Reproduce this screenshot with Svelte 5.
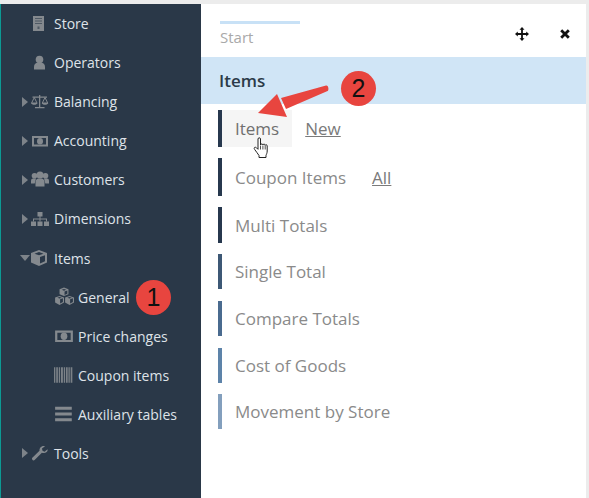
<script>
  const menu = [
    { label: "Store", icon: "store" },
    { label: "Operators", icon: "user" },
    { label: "Balancing", icon: "scale", caret: "right" },
    { label: "Accounting", icon: "money", caret: "right" },
    { label: "Customers", icon: "group", caret: "right" },
    { label: "Dimensions", icon: "tree", caret: "right" },
    { label: "Items", icon: "cube", caret: "down" },
    { label: "General", icon: "cubes", sub: true },
    { label: "Price changes", icon: "money", sub: true },
    { label: "Coupon items", icon: "barcode", sub: true },
    { label: "Auxiliary tables", icon: "bars", sub: true },
    { label: "Tools", icon: "wrench", caret: "right" },
  ];

  const reports = [
    { label: "Items", link: "New", bar: "#27384e", h: 37, gap: 11, hover: true },
    { label: "Coupon Items", link: "All", bar: "#27384e", h: 38, gap: 11 },
    { label: "Multi Totals", bar: "#27384e", h: 36, gap: 11 },
    { label: "Single Total", bar: "#3d5875", h: 35, gap: 12 },
    { label: "Compare Totals", bar: "#4a6b8f", h: 35, gap: 12 },
    { label: "Cost of Goods", bar: "#5d83a9", h: 35, gap: 11 },
    { label: "Movement by Store", bar: "#839fbd", h: 35, gap: 0 },
  ];
</script>

{#snippet icon(name)}
  <svg class="ico" viewBox="0 0 18 16" fill="currentColor">
    {#if name === "store"}
      <path d="M2 0h11v15H2z" />
      <path d="M4 2h7v1H4zM4 4.500h7v1H4zM4 7h7v1H4zM6.500 10.500h2v2.500h-2z" fill="#2a3848" opacity=".6" />
    {:else if name === "user"}
      <circle cx="8.500" cy="4.500" r="3.800" />
      <path d="M3 14.500v-3C3 9 5 8 6.500 7.500h4c1.500 .5 3.500 1.500 3.500 4v3z" />
    {:else if name === "scale"}
      <path d="M8 1h1.300v12H8zM4 13h9.500v1.300H4zM1.500 2.500h14.500v1.300H1.500z" />
      <path d="M3.300 3.500 .6 9h5.400zM14 3.500 11.300 9h5.400z" fill="none" stroke="currentColor" />
      <path d="M0 9h6.600c-.5 2.400-6.100 2.400-6.600 0zM10.700 9h6.600c-.5 2.400-6.100 2.400-6.600 0z" />
    {:else if name === "money"}
      <path fill-rule="evenodd" d="M1 3h16v10.500H1zM3 5v6.500h12V5z" />
      <ellipse cx="9" cy="8.200" rx="3" ry="3.300" />
    {:else if name === "group"}
      <circle cx="9" cy="3" r="3.600" />
      <circle cx="3.500" cy="3.800" r="2.800" />
      <circle cx="14.500" cy="3.800" r="2.800" />
      <path d="M4.500 14.500V10c0-2 1.500-3.500 3-3.500h3c1.500 0 3 1.500 3 3.500v4.500z" />
      <path d="M0 11.500V9c0-1.800 1-2.500 2-2.500h3L3.700 11.500zM18 11.500V9c0-1.800-1-2.500-2-2.500h-3l1.300 5z" />
    {:else if name === "tree"}
      <path d="M6.500 1h5v4.500h-5zM0 10.500h5V15H0zM6.500 10.500h5V15h-5zM13 10.500h5V15h-5z" />
      <path d="M8.500 5h1v2.500H16v3h-1V8.500H9.500v2h-1v-2H3v2H2v-3h6.500z" />
    {:else if name === "cube"}
      <path fill-rule="evenodd" d="M8 0l8 3v9.500L8 16l-8-3.500V3zM8 2 3.500 3.700 8 5.300l4.500-1.600zM9 7v6.500l5-2.200V5.200z" />
    {:else if name === "cubes"}
      <path fill-rule="evenodd" d="M9-.5l4 1.500v4.500L9 7 5 5.500V1zM5 7l4 1.500V13l-4 2.300L1 13V8.500zM14 7l4 1.500V13l-4 2.300L10 13V8.500zM5 9.300 3 8.600 5 7.900l2 .7zM14 9.300l-2-.7 2-.7 2 .7zM9 2.300 7 1.500 9 .8l2 .7zM5.500 10v3.800L8 12.400V9.200zM14.500 10v3.800l2.500-1.400V9.200zM9.500 3v3.200l2.500-1.100V2.200z" />
    {:else if name === "barcode"}
      <path d="M0 1h1.200v14H0zM2 1h1.500v14H2zM4.300 1h1.200v14H4.300zM6.300 1H8v14H6.300zM8.800 1H10v14H8.800zM10.800 1h1.500v14h-1.500zM13 1h1.200v14H13zM15 1h1.500v14H15z" opacity=".9" />
    {:else if name === "bars"}
      <path d="M1 1.500h15v2.600H1zM1 6.700h15v2.600H1zM1 11.900h15v2.600H1z" />
    {:else if name === "wrench"}
      <path d="M16.500 4.200 13.500 6.700 11.500 5.700 11 3.500l3-2.300C11.500.4 8.300 2 8.500 5.700L1.300 12.800c-1.200 1.300 1 3.500 2.300 2.300l7.300-7.300c3 .8 6.400-1 5.600-3.600z" />
    {/if}
  </svg>
{/snippet}

<div class="page">
  <aside class="sidebar">
    <ul class="menu">
      {#each menu as item}
        <li class="menu-row" class:sub={item.sub}>
          <span class="caret-slot">
            {#if item.caret}<span class="caret {item.caret}"></span>{/if}
          </span>
          <span class="menu-icon">{@render icon(item.icon)}</span>
          <span class="menu-label">{item.label}</span>
        </li>
      {/each}
    </ul>
  </aside>

  <main class="panel">
    <div class="toolbar">
      <div class="tab">
        <span class="tab-line"></span>
        <span class="tab-label">Start</span>
      </div>
      <div class="tools">
        <svg viewBox="0 0 14 14" width="14" height="14" fill="#111">
          <path d="M7 0l2.500 2.800H7.900v3.300h3.300V4.500L14 7l-2.800 2.500V7.900H7.900v3.300h1.600L7 14l-2.500-2.800h1.600V7.900H2.800v1.600L0 7l2.800-2.500v1.600h3.300V2.800H4.500z" />
        </svg>
        <svg viewBox="0 0 10 10" width="10" height="10" fill="none" stroke="#111" stroke-width="2.800">
          <path d="M1.200 1.200l7.600 7.600M8.800 1.200 1.200 8.800" />
        </svg>
      </div>
    </div>

    <h2 class="title">Items</h2>

    <ul class="reports">
      {#each reports as r}
        <li class="report" style="height:{r.h}px;margin-bottom:{r.gap}px;border-color:{r.bar}">
          <span class="report-label" class:hover={r.hover}>{r.label}</span>
          {#if r.link}<span class="report-link">{r.link}</span>{/if}
        </li>
      {/each}
    </ul>
  </main>
</div>

<!-- annotations pasted over the screenshot -->
<span class="badge one">1</span>
<span class="badge two">2</span>
<svg class="arrow" viewBox="0 0 80 40" width="80" height="40">
  <path d="M70 2.500c2.500-.7 3.500 5 1 5.800L30 26l-5-11z" fill="#e8453f" />
  <path d="M2 30 21 11l10 23z" fill="#e8453f" />
</svg>
<svg class="hand" viewBox="0 0 16 22" width="17" height="22">
  <path d="M4.500 2c0-1.600 2.500-1.600 2.500 0v6c.3-1.500 2.300-1.300 2.400 0 .3-1.300 2.200-1.100 2.300.3.400-1 2-.7 2 .7v5c0 2-.7 3-1.200 4.500v2H5.500v-2C4 16.500 2.800 14.500 1.200 12.500-.2 10.800 1.500 9.500 3 10.800L4.500 12.300z" fill="#fff" stroke="#222" stroke-width="1" stroke-linejoin="round" />
  <path d="M7 8.500v4M9.400 8.500v4M11.700 8.500v4" stroke="#222" stroke-width=".8" />
</svg>

<style>
  :global(body) {
    margin: 0;
    background: #ececec;
  }

  .page {
    display: flex;
    width: 589px;
    height: 498px;
    padding-top: 4px;
    box-sizing: border-box;
    overflow: hidden;
    font-family: "Open Sans", "Noto Sans", sans-serif;
  }

  .sidebar {
    width: 201px;
    flex: none;
    background: #2a3848;
    border-left: 1px solid #0c9a94;
    box-sizing: border-box;
  }

  .menu {
    list-style: none;
    margin: 0;
    padding: 0;
  }

  .menu-row {
    display: flex;
    align-items: center;
    height: 39.08px;
    padding-left: 20px;
    color: #dfe3e8;
    font-size: 14px;
  }

  .menu-row.sub {
    padding-left: 53px;
  }

  .sub .caret-slot {
    display: none;
  }

  .caret-slot {
    width: 10px;
    flex: none;
    display: flex;
    align-items: center;
  }

  .caret.right {
    border-left: 6px solid #7d8389;
    border-top: 5px solid transparent;
    border-bottom: 5px solid transparent;
    margin-left: 1px;
  }

  .caret.down {
    border-top: 6px solid #7d8389;
    border-left: 5px solid transparent;
    border-right: 5px solid transparent;
    margin-left: -1px;
  }

  .menu-icon {
    width: 23px;
    flex: none;
    display: flex;
    color: #84898e;
  }

  .sub .menu-icon {
    width: 24px;
  }

  .ico {
    width: 18px;
    height: 16px;
    overflow: visible;
  }

  .sub .ico {
    width: 20px;
    height: 18px;
  }

  .panel {
    width: 385px;
    flex: none;
    background: #fff;
  }

  .toolbar {
    display: flex;
    justify-content: space-between;
    height: 53px;
    padding: 17px 16px 0 19px;
    box-sizing: border-box;
  }

  .tab {
    display: flex;
    flex-direction: column;
  }

  .tab-line {
    width: 80px;
    height: 3px;
    background: #c8e1f6;
  }

  .tab-label {
    margin-top: 3px;
    color: #a9a9a9;
    font-size: 15px;
    line-height: 20px;
  }

  .tools {
    display: flex;
    align-items: center;
    gap: 31px;
    height: 26px;
  }

  .title {
    margin: 0;
    height: 47px;
    line-height: 47px;
    padding-left: 18px;
    background: #d0e5f6;
    color: #2b3a48;
    font-size: 17px;
    font-weight: 600;
  }

  .reports {
    list-style: none;
    margin: 0;
    padding: 6px 0 0 17px;
  }

  .report {
    display: flex;
    align-items: center;
    border-left: 4px solid;
    box-sizing: border-box;
    font-size: 17px;
    color: #8a8a8a;
  }

  .report-label {
    display: flex;
    align-items: center;
    align-self: stretch;
    padding: 0 13px;
  }

  .report-label.hover {
    background: #f5f5f5;
    color: #6f6f6f;
  }

  .report-link {
    margin-left: 13px;
    color: #7a7a7a;
    text-decoration: underline;
  }

  .badge {
    position: absolute;
    width: 35px;
    height: 35px;
    border-radius: 50%;
    background: #e8453f;
    color: #111;
    font-family: "Liberation Sans", sans-serif;
    font-size: 25px;
    line-height: 35px;
    text-align: center;
  }

  .badge.one {
    left: 136px;
    top: 280px;
  }

  .badge.two {
    left: 341px;
    top: 71px;
  }

  .arrow {
    position: absolute;
    left: 256px;
    top: 83px;
  }

  .hand {
    position: absolute;
    left: 253px;
    top: 137px;
  }
</style>
